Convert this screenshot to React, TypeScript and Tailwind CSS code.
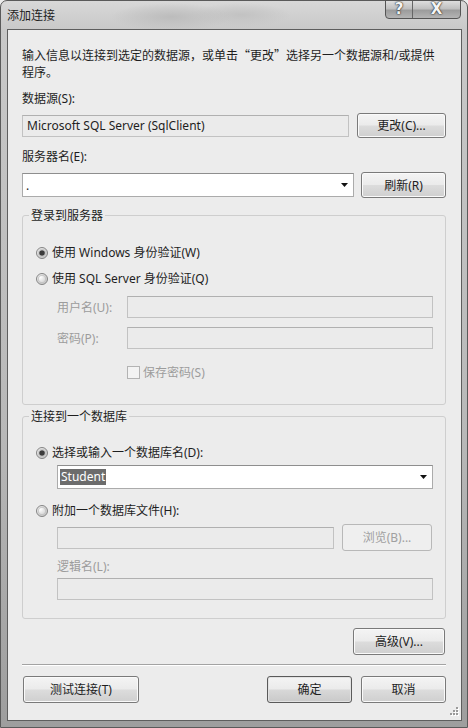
import React from "react";

const FONT = "font-['Noto_Sans','Noto_Sans_CJK_SC',sans-serif]";

export default function App() {
  return (
    <div className={`h-[728px] w-[468px] bg-[#ececec] ${FONT} text-[12px] leading-[17px] text-[#1e1e1e]`}>
      <div className="relative flex h-full w-full flex-col rounded-t-[7px] border border-[#5a5a5a] bg-[linear-gradient(to_bottom,#d8d8d8,#c8c8c8_30px,#b8b8b8_60%,#9e9e9e)]">
        {/* Title bar */}
        <div className="flex h-[28px] shrink-0 items-start bg-[radial-gradient(ellipse_60px_14px_at_170px_16px,#bcbcbc,transparent),radial-gradient(ellipse_50px_12px_at_240px_14px,#c2c2c2,transparent)]">
          <span className="ml-[6px] mt-[6px]">添加连接</span>
          <div className="ml-auto mr-[6px] -mt-px flex h-[19px] overflow-hidden rounded-b-[4px] border border-[#555] bg-[linear-gradient(to_bottom,#dedede,#c0c0c0_45%,#9c9c9c_55%,#b4b4b4)]">
            <CaptionBtn className="w-[27px] border-r border-[#666]">?</CaptionBtn>
            <CaptionBtn className="w-[47px]">X</CaptionBtn>
          </div>
        </div>

        {/* Client area */}
        <div className="relative mb-[6px] ml-[6px] mr-[5px] flex flex-1 flex-col border border-[#5e5e5e] bg-[#ececec] pl-[14px] pr-[15px]">
          <p className="mt-[16px]">
            输入信息以连接到选定的数据源，或单击<span className="font-['Noto_Sans_CJK_SC',sans-serif]">“</span>更改
            <span className="font-['Noto_Sans_CJK_SC',sans-serif]">”</span>选择另一个数据源和/或提供
            <br />
            程序。
          </p>

          <div className="mt-[9px]">数据源(S):</div>
          <div className="mt-[6px] flex h-[25px] items-center">
            <TextBox className="w-[327px] pl-[4px]">Microsoft SQL Server (SqlClient)</TextBox>
            <Btn className="ml-auto h-[25px] w-[89px]">更改(C)...</Btn>
          </div>

          <div className="mt-[10px]">服务器名(E):</div>
          <div className="mt-[7px] flex h-[26px] items-center">
            <Combo className="w-[332px]">
              <span className="pl-[3px]">.</span>
            </Combo>
            <Btn className="ml-auto h-[26px] w-[85px]">刷新(R)</Btn>
          </div>

          {/* Login group */}
          <fieldset className="mt-[9px] rounded-[3px] border border-[#cecece] pb-[23px]">
            <legend className="ml-[6px] px-[2px]">登录到服务器</legend>
            <RadioRow className="mt-[20px]" checked>
              使用 Windows 身份验证(W)
            </RadioRow>
            <RadioRow className="mt-[9px]">使用 SQL Server 身份验证(Q)</RadioRow>
            <div className="mt-[9px] flex h-[22px] items-center">
              <span className="ml-[34px] w-[70px] text-[#9c9c9c]">用户名(U):</span>
              <TextBox className="mr-[12px] flex-1" />
            </div>
            <div className="mt-[9px] flex h-[22px] items-center">
              <span className="ml-[34px] w-[70px] text-[#9c9c9c]">密码(P):</span>
              <TextBox className="mr-[12px] flex-1" />
            </div>
            <div className="ml-[104px] mt-[15px] flex h-[17px] items-center gap-[3px] text-[#9c9c9c]">
              <span className="h-[13px] w-[13px] border border-[#b3b3b3] bg-[#f3f3f3]" />
              保存密码(S)
            </div>
          </fieldset>

          {/* Database group */}
          <fieldset className="mt-[3px] rounded-[3px] border border-[#cecece] pb-[18px]">
            <legend className="ml-[6px] px-[2px]">连接到一个数据库</legend>
            <RadioRow className="mt-[19px]" checked>
              选择或输入一个数据库名(D):
            </RadioRow>
            <Combo className="ml-[34px] mr-[12px] mt-[4px]">
              <span className="ml-[2px] h-[16px] bg-[#6c6c6c] px-px leading-[16px] text-white">Student</span>
            </Combo>
            <RadioRow className="mt-[13px]">附加一个数据库文件(H):</RadioRow>
            <div className="ml-[34px] mr-[13px] mt-[5px] flex h-[27px] items-center gap-[8px]">
              <TextBox className="flex-1" />
              <Btn className="h-[27px] w-[90px]" disabled>
                浏览(B)...
              </Btn>
            </div>
            <div className="ml-[34px] mt-[7px] text-[#9c9c9c]">逻辑名(L):</div>
            <TextBox className="ml-[34px] mr-[12px] mt-[3px]" />
          </fieldset>

          <div className="mt-[9px] flex justify-end">
            <Btn className="mr-px h-[27px] w-[92px]">高级(V)...</Btn>
          </div>

          <div className="mt-[9px] h-[2px] border-t border-b border-t-[#a3a3a3] border-b-white" />

          <div className="mt-[10px] flex h-[27px] items-center gap-[9px]">
            <Btn className="ml-px h-[27px] w-[116px]">测试连接(T)</Btn>
            <Btn className="ml-auto h-[27px] w-[85px]" isDefault>
              确定
            </Btn>
            <Btn className="h-[27px] w-[85px]">取消</Btn>
          </div>

          {/* Resize grip */}
          <svg className="absolute bottom-[4px] right-[2px]" width="9" height="9" viewBox="0 0 9 9">
            {[
              [6, 0],
              [3, 3],
              [6, 3],
              [0, 6],
              [3, 6],
              [6, 6],
            ].map(([x, y], i) => (
              <g key={i}>
                <rect x={x + 1} y={y + 1} width="2" height="2" fill="#ffffff" />
                <rect x={x} y={y} width="2" height="2" fill="#9a9a9a" />
              </g>
            ))}
          </svg>
        </div>
      </div>
    </div>
  );
}

function CaptionBtn({ children, className }: { children: React.ReactNode; className?: string }) {
  return (
    <div
      className={`flex items-center justify-center font-['DejaVu_Sans',sans-serif] text-[15px] font-bold text-[#f4f4f4] [text-shadow:0_0_2px_#222,0_0_1px_#111] ${className ?? ""}`}
    >
      {children}
    </div>
  );
}

function Btn({
  children,
  className,
  disabled,
  isDefault,
}: {
  children: React.ReactNode;
  className?: string;
  disabled?: boolean;
  isDefault?: boolean;
}) {
  const look = disabled
    ? "border-[#b8b8b8] bg-[#efefef] text-[#a0a0a0]"
    : isDefault
      ? "border-[#5a5a5a] bg-[linear-gradient(to_bottom,#f4f4f4,#ebebeb_48%,#d8d8d8_52%,#c9c9c9)] shadow-[inset_0_0_0_1px_#e2e2e2]"
      : "border-[#7a7a7a] bg-[linear-gradient(to_bottom,#f4f4f4,#ebebeb_48%,#dcdcdc_52%,#cfcfcf)] shadow-[inset_0_0_0_1px_#fafafa]";
  return (
    <div className={`flex shrink-0 items-center justify-center rounded-[3px] border ${look} ${className ?? ""}`}>
      {children}
    </div>
  );
}

function TextBox({ children, className }: { children?: React.ReactNode; className?: string }) {
  return (
    <div
      className={`flex h-[22px] items-center border border-[#c2c2c2] border-t-[#b0b0b0] bg-[#ebebeb] ${className ?? ""}`}
    >
      {children}
    </div>
  );
}

function Combo({ children, className }: { children?: React.ReactNode; className?: string }) {
  return (
    <div
      className={`flex h-[24px] items-center border border-[#ababab] border-t-[#8e8e8e] bg-white ${className ?? ""}`}
    >
      {children}
      <svg className="ml-auto mr-[5px]" width="7" height="4" viewBox="0 0 7 4">
        <polygon points="0,0 7,0 3.5,4" fill="#111" />
      </svg>
    </div>
  );
}

function RadioRow({
  children,
  className,
  checked,
}: {
  children: React.ReactNode;
  className?: string;
  checked?: boolean;
}) {
  return (
    <div className={`ml-[13px] flex h-[17px] items-center gap-[4px] ${className ?? ""}`}>
      <svg width="12" height="12" viewBox="0 0 12 12">
        <defs>
          <radialGradient id="rfill" cx="0.35" cy="0.35" r="0.75">
            <stop offset="0" stopColor="#ffffff" />
            <stop offset="1" stopColor="#c4c4c4" />
          </radialGradient>
        </defs>
        <circle cx="6" cy="6" r="5.5" fill="url(#rfill)" stroke="#858585" />
        <circle cx="6" cy="6" r="3.8" fill="none" stroke="#bdbdbd" strokeWidth="0.8" />
        {checked && <circle cx="6" cy="6" r="2.8" fill="#3c3c3c" />}
      </svg>
      {children}
    </div>
  );
}
